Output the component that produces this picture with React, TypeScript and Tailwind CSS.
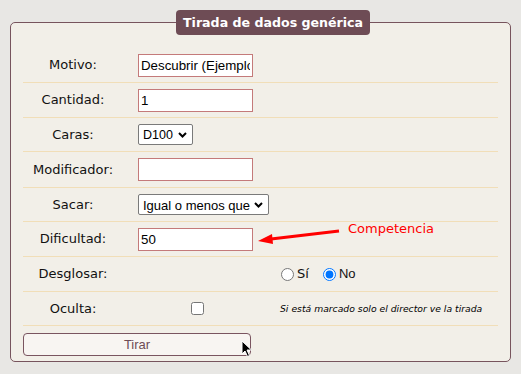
import React from "react";

const labelFont = { fontFamily: '"DejaVu Sans", Verdana, sans-serif' };
const arialFont = { fontFamily: '"Liberation Sans", Arial, sans-serif' };

function Chevron() {
  return (
    <svg width="9" height="6" viewBox="0 0 9 6" className="absolute right-[5px] top-1/2 -translate-y-1/2 pointer-events-none">
      <path d="M1 1 L4.5 4.5 L8 1" fill="none" stroke="#000" strokeWidth="2" />
    </svg>
  );
}

export default function App() {
  return (
    <div
      className="relative w-[521px] h-[374px] bg-[#e8e7e4] pt-[10px] pl-[10px] overflow-hidden"
      style={labelFont}
    >
      <fieldset className="w-[501px] border border-[#77545d] rounded-[5px] bg-[#f2efe8] p-0 m-0">
        <legend className="ml-[165px] h-[25px] px-[7px] rounded-[4px] bg-[#6e4c55] text-white font-bold text-[12.6px] leading-[25px]">
          Tirada de dados genérica
        </legend>
        <div className="px-[12px] pt-[13px] pb-[5px] text-[13px] text-[#111]">
          {/* Motivo */}
          <div className="grid grid-cols-[100px_147px_1fr] items-center h-[35px] border-b border-[#f1deb8]">
            <div className="text-center">Motivo:</div>
            <div className="pl-[15px]">
              <input
                readOnly
                value="Descubrir (Ejemplo)"
                className="w-[115px] h-[23px] border border-[#c47a7a] bg-white px-[2px] text-[13.3px] text-black outline-none"
                style={arialFont}
              />
            </div>
            <div />
          </div>
          {/* Cantidad */}
          <div className="grid grid-cols-[100px_147px_1fr] items-center h-[35px] border-b border-[#f1deb8]">
            <div className="text-center">Cantidad:</div>
            <div className="pl-[15px]">
              <input
                readOnly
                value="1"
                className="w-[115px] h-[23px] border border-[#c47a7a] bg-white px-[2px] text-[13.3px] text-black outline-none"
                style={arialFont}
              />
            </div>
            <div />
          </div>
          {/* Caras */}
          <div className="grid grid-cols-[100px_147px_1fr] items-center h-[34px] border-b border-[#f1deb8]">
            <div className="text-center">Caras:</div>
            <div className="pl-[15px]">
              <div className="relative w-[55px] h-[21px] border border-[#7a7a7a] rounded-[2px] bg-white">
                <span
                  className="absolute left-[4px] top-1/2 -translate-y-1/2 text-[12.5px] leading-none text-black"
                  style={arialFont}
                >
                  D100
                </span>
                <Chevron />
              </div>
            </div>
            <div />
          </div>
          {/* Modificador */}
          <div className="grid grid-cols-[100px_147px_1fr] items-center h-[36px] border-b border-[#f1deb8]">
            <div className="text-center">Modificador:</div>
            <div className="pl-[15px]">
              <input
                readOnly
                value=""
                className="w-[115px] h-[23px] border border-[#c47a7a] bg-white px-[2px] text-[13.3px] outline-none"
              />
            </div>
            <div />
          </div>
          {/* Sacar */}
          <div className="grid grid-cols-[100px_147px_1fr] items-center h-[34px] border-b border-[#f1deb8]">
            <div className="text-center">Sacar:</div>
            <div className="pl-[15px]">
              <div className="relative w-[131px] h-[21px] border border-[#7a7a7a] rounded-[2px] bg-white">
                <span
                  className="absolute left-[4px] top-1/2 -translate-y-1/2 text-[13px] leading-none whitespace-nowrap text-black"
                  style={arialFont}
                >
                  Igual o menos que
                </span>
                <Chevron />
              </div>
            </div>
            <div />
          </div>
          {/* Dificultad */}
          <div className="relative grid grid-cols-[100px_147px_1fr] items-center h-[35px] border-b border-[#f1deb8]">
            <div className="text-center">Dificultad:</div>
            <div className="pl-[15px]">
              <input
                readOnly
                value="50"
                className="w-[115px] h-[23px] border border-[#c47a7a] bg-white px-[2px] text-[13.3px] text-black outline-none"
                style={arialFont}
              />
            </div>
            <div />
            {/* annotation */}
            <svg className="absolute left-[234px] top-[4px]" width="86" height="20" viewBox="0 0 86 20">
              <path d="M82 5 L14 13" stroke="#ff0000" strokeWidth="3" fill="none" />
              <path d="M1 15 L15 8 L16 18 Z" fill="#ff0000" />
            </svg>
            <span className="absolute left-[325px] top-[-3px] text-[#ff0000] text-[13px]">Competencia</span>
          </div>
          {/* Desglosar */}
          <div className="grid grid-cols-[100px_147px_1fr] items-center h-[35px] border-b border-[#f1deb8]">
            <div className="text-center">Desglosar:</div>
            <div />
            <div className="pl-[11px] flex items-center">
              <label className="flex items-center">
                <input type="radio" name="d" className="w-[13px] h-[13px] m-0" readOnly />
                <span className="ml-[3px]">Sí</span>
              </label>
              <label className="flex items-center ml-[14px]">
                <input type="radio" name="d" defaultChecked className="w-[13px] h-[13px] m-0" />
                <span className="ml-[3px]" style={arialFont}>No</span>
              </label>
            </div>
          </div>
          {/* Oculta */}
          <div className="grid grid-cols-[100px_147px_1fr] items-center h-[34px] border-b border-[#f1deb8]">
            <div className="text-center">Oculta:</div>
            <div className="flex justify-center pl-[1px]">
              <input type="checkbox" className="w-[13px] h-[13px] m-0" />
            </div>
            <div className="pl-[10px] italic text-[9.25px] whitespace-nowrap text-black">
              Si está marcado solo el director ve la tirada
            </div>
          </div>
          {/* Button */}
          <div className="relative pt-[7px]">
            <button
              className="w-[228px] h-[23px] border border-[#7a5560] rounded-[4px] bg-[#f8f5f2] text-[#6e4c55] text-[13px]"
              style={arialFont}
            >
              Tirar
            </button>
            <svg className="absolute left-[218px] top-[14px]" width="12" height="18" viewBox="0 0 12 18">
              <path d="M1 1 L1 14 L4 11 L6.5 16.5 L8.5 15.5 L6 10 L10.5 10 Z" fill="#000" stroke="#fff" strokeWidth="1" />
            </svg>
          </div>
        </div>
      </fieldset>
    </div>
  );
}
